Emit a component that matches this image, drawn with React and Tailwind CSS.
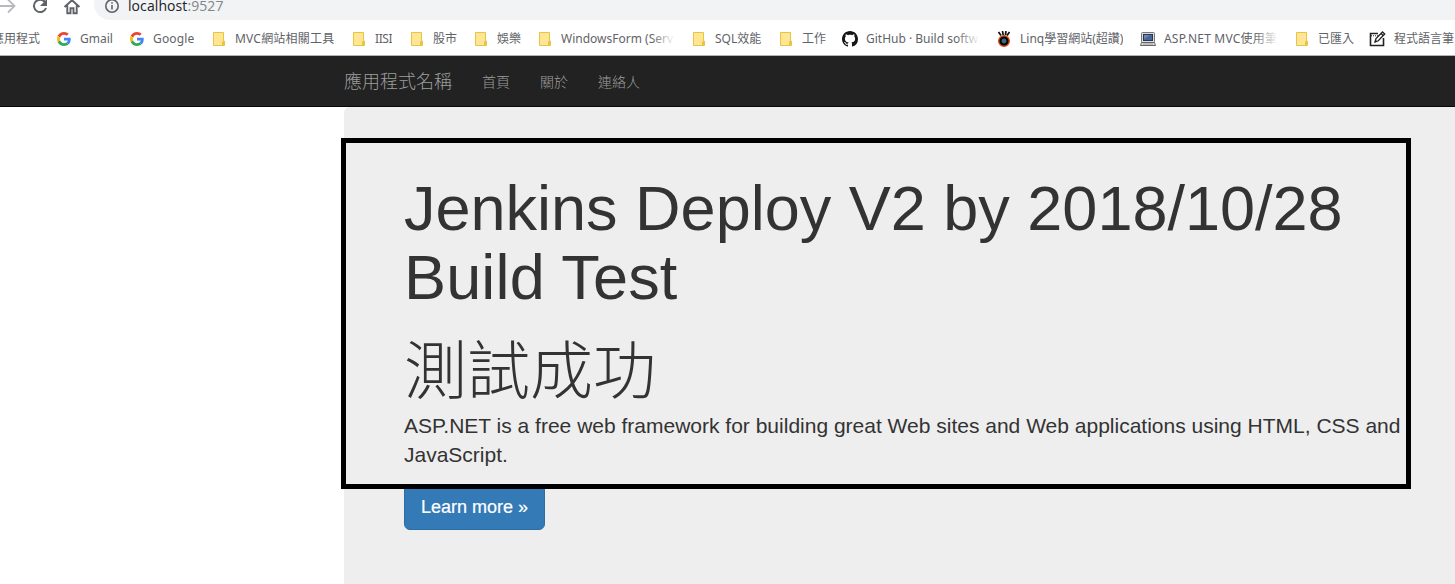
import React from 'react';

function Folder() {
  return (
    <svg width="16" height="16" viewBox="0 0 16 16" className="shrink-0">
      <path d="M2.5 1.5h10v8.500h1v4.500h-11z" fill="#ffe694" stroke="#e9c443" />
      <path d="M11.500 10.500h1v3.500h-1z" fill="#ffe694" stroke="#e9c443" />
    </svg>
  );
}

function Google() {
  return (
    <svg width="14" height="14" viewBox="0 0 48 48" className="ml-px shrink-0">
      <path fill="#EA4335" d="M24 9.5c3.54 0 6.71 1.22 9.21 3.6l6.85-6.85C35.9 2.38 30.47 0 24 0 14.62 0 6.51 5.38 2.56 13.22l7.98 6.19C12.43 13.72 17.74 9.5 24 9.5z" />
      <path fill="#4285F4" d="M46.98 24.55c0-1.57-.15-3.09-.38-4.55H24v9.02h12.94c-.58 2.96-2.26 5.48-4.78 7.18l7.73 6c4.51-4.18 7.09-10.36 7.09-17.65z" />
      <path fill="#FBBC05" d="M10.53 28.59c-.48-1.45-.76-2.99-.76-4.59s.27-3.14.76-4.59l-7.98-6.19C.92 16.46 0 20.12 0 24s.92 7.54 2.56 10.78l7.97-6.19z" />
      <path fill="#34A853" d="M24 48c6.48 0 11.93-2.13 15.89-5.81l-7.73-6c-2.15 1.45-4.92 2.3-8.16 2.3-6.26 0-11.57-4.22-13.47-9.91l-7.98 6.19C6.51 42.62 14.62 48 24 48z" />
    </svg>
  );
}

function Github() {
  return (
    <svg width="16" height="16" viewBox="0 0 16 16" className="shrink-0" fill="#161614">
      <path d="M8 0C3.58 0 0 3.58 0 8c0 3.54 2.29 6.53 5.47 7.59.4.07.55-.17.55-.38 0-.19-.01-.82-.01-1.49-2.01.37-2.53-.49-2.69-.94-.09-.23-.48-.94-.82-1.13-.28-.15-.68-.52-.01-.53.63-.01 1.08.58 1.23.82.72 1.21 1.87.87 2.33.66.07-.52.28-.87.51-1.07-1.78-.2-3.64-.89-3.64-3.95 0-.87.31-1.59.82-2.15-.08-.2-.36-1.02.08-2.12 0 0 .67-.21 2.2.82.64-.18 1.32-.27 2-.27s1.36.09 2 .27c1.53-1.04 2.2-.82 2.2-.82.44 1.1.16 1.92.08 2.12.51.56.82 1.27.82 2.15 0 3.07-1.87 3.75-3.65 3.95.29.25.54.73.54 1.48 0 1.07-.01 1.93-.01 2.2 0 .21.15.46.55.38A8.01 8.01 0 0 0 16 8c0-4.42-3.58-8-8-8z" />
    </svg>
  );
}

function Eye() {
  return (
    <svg width="16" height="16" viewBox="0 0 16 16" className="shrink-0">
      <path d="M2.500 1l2.500 3.500M6.500 0l.7 4M10 0l-.6 4M13.500 1L11 4.500" stroke="#111" strokeWidth="1.700" fill="none" />
      <circle cx="8" cy="10" r="5.300" fill="#050505" stroke="#d8481c" strokeWidth="1.400" />
      <circle cx="8" cy="10" r="2" fill="#14242b" stroke="#347f91" />
      <path d="M8 8.500v3M6.500 10h3" stroke="#58a6b8" strokeWidth=".7" />
    </svg>
  );
}

function Laptop() {
  return (
    <svg width="16" height="16" viewBox="0 0 16 16" className="shrink-0">
      <rect x="1.500" y="1.500" width="13" height="10" rx="1" fill="#ddd" stroke="#777" />
      <rect x="3.500" y="3.500" width="9" height="6" fill="#4a6599" stroke="#273659" />
      <path d="M4 4h6L4 8z" fill="#7086af" />
      <path d="M1.500 11.500h13l1 3H.5z" fill="#ddd" stroke="#666" />
      <path d="M3 13h10" stroke="#999" />
    </svg>
  );
}

function Notebook() {
  return (
    <svg width="17" height="16" viewBox="0 0 17 16" className="-ml-px shrink-0" fill="none" stroke="#222">
      <path d="M9 2.500H1.500v12h13V7" strokeWidth="1.600" />
      <path d="M2 4.800h7" strokeWidth="1" strokeDasharray="1 1" />
      <path d="M6 11l1-3.500L13.500 1l2.200 2L9.300 9.800z" strokeWidth="1.300" fill="#fff" />
      <path d="M12 2.500l2.200 2M6 11l2-1" strokeWidth="1.300" />
    </svg>
  );
}

const bookmarks = [
  { label: 'Gmail', Icon: Google, width: 'w-[73px]', tracking: 'ml-[9px]' },
  { label: 'Google', Icon: Google, width: 'w-[82px]', tracking: 'ml-[9px] tracking-[0.15px]' },
  { label: 'MVC網站相關工具', Icon: Folder, width: 'w-[140px]', tracking: 'ml-2 tracking-[0.2px]' },
  { label: 'IISI', Icon: Folder, width: 'w-[58px]', tracking: 'ml-2 -tracking-[0.4px]' },
  { label: '股市', Icon: Folder, width: 'w-[64px]' },
  { label: '娛樂', Icon: Folder, width: 'w-[64px]' },
  { label: 'WindowsForm (Serv', Icon: Folder, width: 'w-[154px]', fade: true },
  { label: 'SQL效能', Icon: Folder, width: 'w-[87px]' },
  { label: '工作', Icon: Folder, width: 'w-[64px]' },
  { label: 'GitHub · Build softwa', Icon: Github, width: 'w-[154px]', fade: true },
  { label: 'Linq學習網站(超讚)', Icon: Eye, width: 'w-[144px]' },
  { label: 'ASP.NET MVC使用筆', Icon: Laptop, width: 'w-[154px]', fade: true, tracking: 'ml-2 tracking-[0.2px]' },
  { label: '已匯入', Icon: Folder, width: 'w-[76px]' },
  { label: '程式語言筆', Icon: Notebook, width: 'w-[100px]' },
];

function Bookmark({ label, Icon, width, fade, tracking = 'ml-2' }) {
  return (
    <div className={`flex h-full shrink-0 items-center ${width}`}>
      <Icon />
      <span className={`relative overflow-hidden ${fade ? 'w-[114px]' : ''} ${tracking}`}>
        {label}
        {fade && <span className="absolute inset-y-0 right-0 w-6 bg-gradient-to-r from-white/0 to-white" />}
      </span>
    </div>
  );
}

function Toolbar() {
  return (
    <div className="flex h-5 shrink-0 overflow-hidden bg-white">
      <svg width="94" height="20" viewBox="0 0 94 20" fill="none" className="shrink-0">
        <path d="M0 6h14M8 -.5l6.500 6.500L8 12.500" stroke="#b8babd" strokeWidth="1.800" />
        <path d="M45 2a6.200 6.200 0 1 0 1 6" stroke="#5f6368" strokeWidth="2" />
        <path d="M47 -1v7h-7z" fill="#5f6368" />
        <path d="M64.500 7L72 .2 79.500 7M67.300 5.500v7.700h3.200v-5h3v5h3.200V5.500" stroke="#5f6368" strokeWidth="1.900" />
      </svg>
      <div className="-mt-3 flex h-8 flex-1 items-start rounded-l-full bg-[#f1f3f4] pl-[11px]">
        <svg width="14" height="14" viewBox="0 0 14 14" fill="none" stroke="#5f6368" className="mt-[11px] shrink-0">
          <circle cx="7" cy="7" r="6.200" strokeWidth="1.600" />
          <path d="M7 6v4.500M7 3.200v1.600" strokeWidth="1.600" />
        </svg>
        <span className="ml-[9px] mt-2 font-['Open_Sans',sans-serif] text-[14px] leading-5 tracking-[0.08px] text-[#202124]">
          localhost<span className="text-[#80868b]">:9527</span>
        </span>
      </div>
    </div>
  );
}

export default function App() {
  return (
    <div className="flex h-[584px] w-[1455px] flex-col overflow-hidden bg-white">
      <Toolbar />
      <div className="flex h-9 shrink-0 items-center overflow-hidden whitespace-nowrap border-b border-[#b2b4b6] pt-[2px] font-['Noto_Sans','Noto_Sans_CJK_TC',sans-serif] text-[12px] leading-5 text-[#5f6368]">
        <div className="flex w-14 shrink-0 justify-end pr-4">
          <span>應用程式</span>
        </div>
        {bookmarks.map((b) => <Bookmark key={b.label} {...b} />)}
      </div>
      <nav className="flex h-[51px] shrink-0 items-center border-b border-[#080808] bg-[#222] pl-[344px] pt-[2px] font-['Liberation_Sans','Noto_Sans_CJK_TC',sans-serif] text-[14px] font-light text-[#9d9d9d]">
        <a className="mr-[30px] text-[18px] leading-5">應用程式名稱</a>
        <div className="flex gap-[30px] leading-5">
          <a>首頁</a>
          <a>關於</a>
          <a>連絡人</a>
        </div>
      </nav>
      <main className="flex flex-1 pl-[344px] font-['Liberation_Sans','Noto_Sans_CJK_TC',sans-serif] text-[#333]">
        <section className="relative flex-1 rounded-tl-md bg-[#eee] pl-[60px] pt-[67px]">
          <h1 className="w-[1000px] text-[63px] leading-[69px]">
            Jenkins Deploy V2 by 2018/10/28 <span className="tracking-[0.15px]">Build Test</span>
          </h1>
          <h1 className="mt-[25px] text-[63px] font-light leading-[69px]">測試成功</h1>
          <p className="mt-[5px] w-[1000px] text-[21px] leading-[29px]">
            ASP.NET is a free web framework for building great Web sites and Web applications using HTML, CSS and JavaScript.
          </p>
          <a className="mt-[15px] flex h-[46px] w-[141px] items-center justify-center rounded-md border border-[#2e6da4] bg-[#337ab7] text-[18px] text-white [-webkit-text-stroke:0.2px_white]">
            Learn more »
          </a>
          <div className="absolute -left-[3px] top-[31px] h-[351px] w-[1070px] border-[5px] border-black" />
        </section>
      </main>
    </div>
  );
}
